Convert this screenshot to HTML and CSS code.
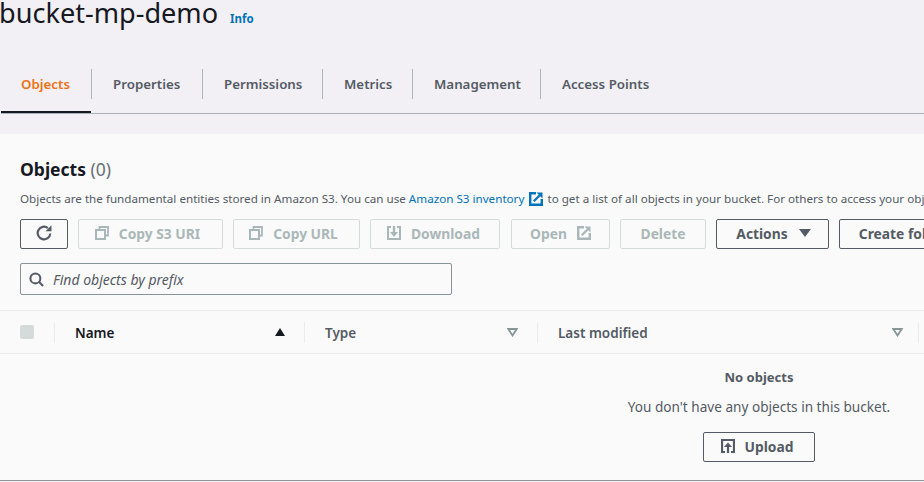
FILE: index.html
```html
<!DOCTYPE html>
<html lang="en">
<head>
    <meta charset="UTF-8">
    <meta name="viewport" content="width=device-width, initial-scale=1.0">
    <title>bucket-mp-demo</title>
    <link rel="stylesheet" href="styles.css">
</head>
<body>
    <header class="top">
        <div class="title-row">
            <h1>bucket-mp-demo</h1>
            <a class="info" href="#">Info</a>
        </div>
        <nav class="tabs">
            <a class="tab tab-active" href="#">Objects</a>
            <a class="tab" href="#">Properties</a>
            <a class="tab" href="#">Permissions</a>
            <a class="tab" href="#">Metrics</a>
            <a class="tab" href="#">Management</a>
            <a class="tab" href="#">Access Points</a>
        </nav>
    </header>

    <main class="panel">
        <div class="panel-head">
            <h2>Objects <span class="count">(0)</span></h2>
            <p class="desc">Objects are the fundamental entities stored in Amazon S3. You can use <a href="#">Amazon S3 inventory</a>
                <svg class="ext-blue" viewBox="0 0 14 14"><path d="M7 1.200H1.200v11.600h11.600V7" fill="none" stroke="#0073bb" stroke-width="2.400"/><path d="M4.800 9.200 11 3" fill="none" stroke="#0073bb" stroke-width="2.200"/><path d="M7.500 .5h6v6z" fill="#0073bb"/></svg>
                to get a list of all objects in your bucket. For others to access your objects, you'll need to explicitly grant them permissions.</p>
            <div class="toolbar">
                <button class="btn btn-refresh">
                    <svg class="icon-lg" viewBox="0 0 16 16"><path d="M14.300 8.500A6.300 6.300 0 1 1 11.800 3" fill="none" stroke="#545b64" stroke-width="2.200"/><path d="M9.500 6.200h6v-6z" fill="#545b64"/></svg>
                </button>
                <button class="btn btn-off w-s3" disabled>
                    <svg class="icon" viewBox="0 0 14 14"><path d="M4.500 3.500V1h8.500v8.500h-2.500" fill="none" stroke="#aab7b8" stroke-width="1.800"/><rect x="1" y="4" width="9" height="9" fill="none" stroke="#aab7b8" stroke-width="2"/></svg>
                    Copy S3 URI
                </button>
                <button class="btn btn-off w-url" disabled>
                    <svg class="icon" viewBox="0 0 14 14"><path d="M4.500 3.500V1h8.500v8.500h-2.500" fill="none" stroke="#aab7b8" stroke-width="1.800"/><rect x="1" y="4" width="9" height="9" fill="none" stroke="#aab7b8" stroke-width="2"/></svg>
                    Copy URL
                </button>
                <button class="btn btn-off w-down" disabled>
                    <svg class="icon" viewBox="0 0 14 14"><path d="M4 1H1v12h12V1h-3" fill="none" stroke="#aab7b8" stroke-width="2"/><path d="M7 0v7" stroke="#aab7b8" stroke-width="2.400"/><path d="M3 6h8l-4 5z" fill="#aab7b8"/></svg>
                    Download
                </button>
                <button class="btn btn-off w-open" disabled>
                    Open
                    <svg class="icon" viewBox="0 0 14 14"><path d="M7 1.200H1.200v11.600h11.600V7" fill="none" stroke="#aab7b8" stroke-width="2.400"/><path d="M4.800 9.200 11 3" fill="none" stroke="#aab7b8" stroke-width="2.200"/><path d="M7.500 .5h6v6z" fill="#aab7b8"/></svg>
                </button>
                <button class="btn btn-off w-del" disabled>Delete</button>
                <button class="btn w-act">Actions <span class="caret"></span></button>
                <button class="btn w-create">Create folder</button>
            </div>
            <div class="search">
                <svg class="icon-search" viewBox="0 0 16 16"><circle cx="6.800" cy="6.800" r="5.300" fill="none" stroke="#545b64" stroke-width="2.200"/><path d="M10.500 10.500 15 15" stroke="#545b64" stroke-width="2.200"/></svg>
                <span class="placeholder">Find objects by prefix</span>
            </div>
        </div>

        <div class="table-head">
            <div class="cell cell-check"><span class="checkbox"></span></div>
            <div class="cell cell-sorted">Name <span class="sort-up"></span></div>
            <div class="cell">Type <svg class="sort-off" viewBox="0 0 11 9"><path d="M1.300 1h8.400L5.500 7.500z" fill="none" stroke="#879596" stroke-width="1.800"/></svg></div>
            <div class="cell cell-modified">Last modified <svg class="sort-off" viewBox="0 0 11 9"><path d="M1.300 1h8.400L5.500 7.500z" fill="none" stroke="#879596" stroke-width="1.800"/></svg></div>
            <div class="cell cell-last"></div>
        </div>

        <div class="empty">
            <strong>No objects</strong>
            <p>You don't have any objects in this bucket.</p>
            <button class="btn w-upload">
                <svg class="icon icon-dark" viewBox="0 0 14 14"><path d="M4 13H1V1h12v12h-3" fill="none" stroke="#545b64" stroke-width="2.200"/><path d="M7 14V7" stroke="#545b64" stroke-width="2.200"/><path d="M3 8h8L7 3.500z" fill="#545b64"/></svg>
                Upload
            </button>
        </div>
    </main>
</body>
</html>
```

FILE: styles.css
```css
* {
    box-sizing: border-box;
    margin: 0;
    padding: 0;
    font-family: "Noto Sans", "Open Sans", sans-serif;
}

html, body {
    height: 482px;
    overflow: hidden;
}

body {
    background-color: #f2eff5;
    color: #16191f;
}

.top {
    height: 134px;
}

.title-row {
    display: flex;
    align-items: baseline;
    height: 69px;
}

h1 {
    margin-left: -1px;
    font-size: 27.100px;
    font-weight: 400;
    line-height: 25px;
}

.info {
    margin-left: 12px;
    font-size: 11.500px;
    font-weight: 700;
    color: #0073bb;
    text-decoration: none;
}

.tabs {
    display: grid;
    grid-template-columns: 91px 111px 120px 90px 128px auto;
    justify-content: start;
    height: 45px;
    margin-left: 1px;
    border-bottom: 1px solid #aab0b8;
}

.tab {
    height: 30px;
    padding-left: 21px;
    line-height: 30px;
    font-size: 13.300px;
    font-weight: 600;
    color: #545b64;
    text-decoration: none;
    white-space: nowrap;
    border-right: 1px solid #aab7b8;
}

.tab:last-child {
    border-right: none;
}

.tab-active {
    position: relative;
    padding-left: 20px;
    color: #ec7211;
}

.tab-active::after {
    content: "";
    position: absolute;
    left: 0;
    right: 0;
    top: 42px;
    height: 2px;
    background-color: #16191f;
}

.panel {
    height: 347px;
    background-color: #fafafa;
    border-bottom: 1px solid #8f9498;
}

.panel-head {
    height: 176px;
    padding: 22px 0 0 20px;
}

h2 {
    font-size: 17.500px;
    font-weight: 700;
    line-height: 26px;
}

.count {
    font-weight: 400;
    color: #687078;
}

.desc {
    margin-top: 8px;
    font-size: 11.650px;
    line-height: 18px;
    color: #545b64;
    white-space: nowrap;
}

.desc a {
    color: #0073bb;
    text-decoration: none;
}

.ext-blue {
    width: 14px;
    height: 14px;
    margin: 0 1px 0 2px;
    vertical-align: -3px;
}

.toolbar {
    display: flex;
    gap: 10px;
    margin-top: 11px;
}

.btn {
    display: flex;
    flex-shrink: 0;
    align-items: center;
    justify-content: center;
    gap: 10px;
    height: 30px;
    padding-bottom: 2px;
    background-color: #fafafa;
    border: 1px solid #545b64;
    border-radius: 2px;
    font-size: 13.800px;
    font-weight: 700;
    color: #545b64;
    cursor: pointer;
}

.btn-off {
    border-color: #d5dbdb;
    color: #aab7b8;
    cursor: default;
}

.btn-refresh { width: 48px; }
.w-s3 { width: 145px; padding-right: 6px; }
.w-url { width: 127px; padding-right: 6px; }
.w-down { width: 130px; padding-right: 3px; }
.w-open { width: 99px; margin-left: 1px; }
.w-del { width: 86px; }
.w-act { width: 113px; gap: 11px; padding-left: 2px; }
.w-create { width: 130px; }
.w-upload { width: 112px; padding-right: 4px; margin: 0 auto; }

.icon {
    flex-shrink: 0;
    width: 14px;
    height: 14px;
}

.icon-lg {
    width: 16px;
    height: 16px;
}

.caret {
    width: 0;
    height: 0;
    border-left: 6px solid transparent;
    border-right: 6px solid transparent;
    border-top: 8px solid #545b64;
}

.search {
    display: flex;
    align-items: center;
    gap: 9px;
    width: 432px;
    height: 32px;
    margin-top: 14px;
    padding-left: 8px;
    border: 1px solid #879596;
    border-radius: 2px;
}

.icon-search {
    width: 15px;
    height: 15px;
}

.placeholder {
    font-size: 14px;
    font-style: italic;
    color: #545b64;
}

.table-head {
    display: grid;
    grid-template-columns: 55px 250px 233px 381px 1fr;
    align-items: center;
    height: 44px;
    border-top: 1px solid #eaeded;
    border-bottom: 1px solid #eaeded;
}

.cell {
    display: flex;
    align-items: center;
    justify-content: space-between;
    height: 21px;
    padding: 1px 19px 0 20px;
    border-right: 1px solid #eaeded;
    font-size: 13.500px;
    font-weight: 600;
    color: #545b64;
}

.cell-sorted {
    color: #16191f;
}

.cell-modified {
    padding-right: 15px;
}

.cell-last {
    border-right: none;
}

.checkbox {
    width: 14px;
    height: 14px;
    margin-bottom: 1px;
    background-color: #d5dbdb;
    border-radius: 2px;
}

.sort-up {
    width: 0;
    height: 0;
    margin-bottom: 1px;
    border-left: 5px solid transparent;
    border-right: 5px solid transparent;
    border-bottom: 8px solid #16191f;
}

.sort-off {
    width: 11px;
    height: 9px;
    margin-bottom: 1px;
}

.empty {
    display: flex;
    flex-direction: column;
    align-items: center;
    width: 342px;
    margin-left: 588px;
    padding-top: 13px;
    font-size: 13.600px;
    color: #545b64;
}

.empty strong {
    font-size: 13px;
    font-weight: 700;
    line-height: 20px;
}

.empty p {
    margin-top: 10px;
    line-height: 20px;
}

.empty .btn {
    margin-top: 15px;
}
```
